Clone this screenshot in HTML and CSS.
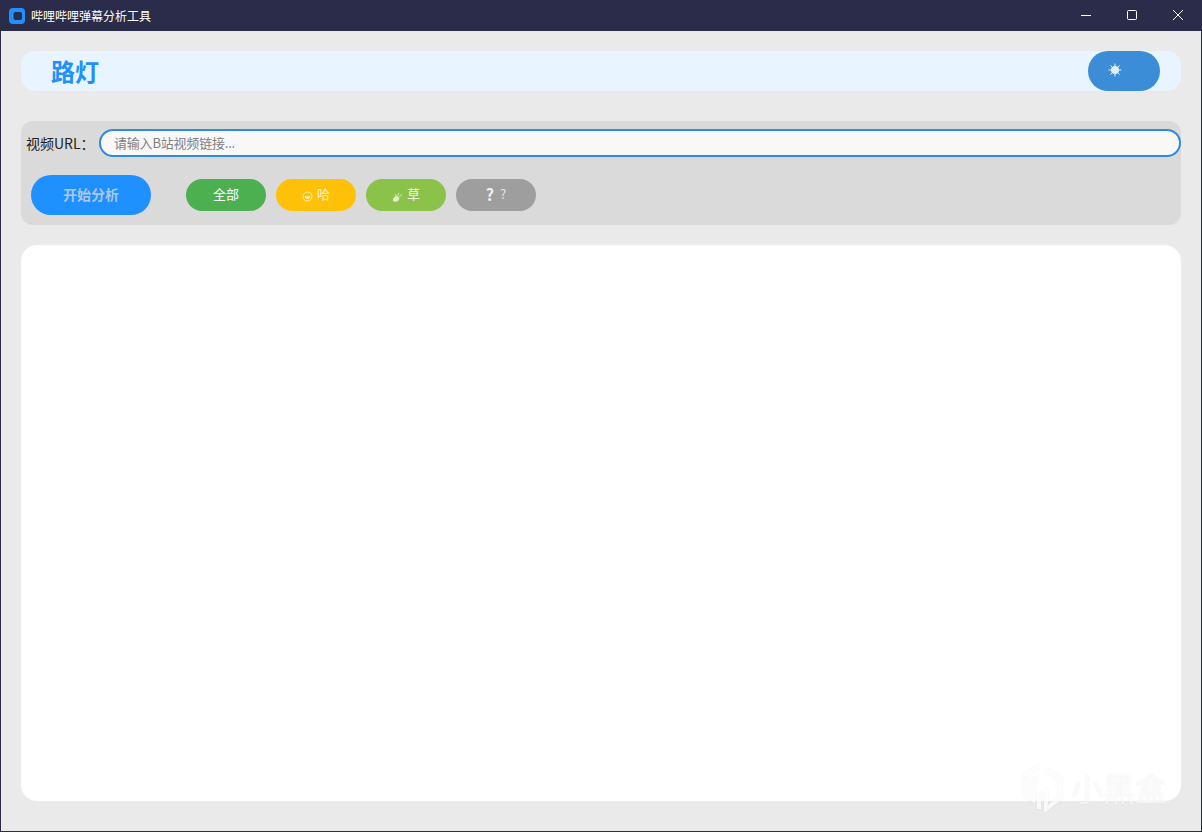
FILE: index.html
```html
<!DOCTYPE html>
<html lang="zh">
<head>
<meta charset="utf-8">
<title>哔哩哔哩弹幕分析工具</title>
<link rel="stylesheet" href="styles.css">
</head>
<body>
<div class="window">
  <div class="titlebar">
    <svg class="app-icon" width="16" height="16" viewBox="0 0 16 16"><rect width="16" height="16" rx="4" fill="#1e90ff"/><rect x="4.500" y="4" width="8.500" height="8" rx="2" fill="#2b2b4a"/></svg>
    <span class="app-title">哔哩哔哩弹幕分析工具</span>
    <div class="win-controls">
      <svg class="win-btn" width="46" height="31" viewBox="0 0 46 31"><path d="M18 15.500h10" stroke="#fff" fill="none"/></svg>
      <svg class="win-btn" width="46" height="31" viewBox="0 0 46 31"><rect x="18.500" y="10.500" width="9" height="9" rx="1" stroke="#fff" fill="none"/></svg>
      <svg class="win-btn" width="46" height="31" viewBox="0 0 46 31"><path d="M18 10l10 10M28 10L18 20" stroke="#fff" fill="none"/></svg>
    </div>
  </div>
  <main class="content">
    <header class="header">
      <h1 class="brand">路灯</h1>
      <button class="theme-btn">
        <svg width="14" height="14" viewBox="0 0 14 14"><circle cx="7" cy="7" r="4" fill="#e3eef8"/><path d="M7 0.500v13M0.500 7h13M2.400 2.400l9.200 9.200M11.600 2.400l-9.200 9.200" stroke="#e3eef8" stroke-width="1"/></svg>
      </button>
    </header>
    <section class="panel">
      <div class="url-row">
        <label class="url-label">视频URL：</label>
        <input class="url-input" type="text" placeholder="请输入B站视频链接...">
      </div>
      <div class="action-row">
        <button class="start-btn">开始分析</button>
        <div class="chips">
          <button class="chip chip-all">全部</button>
          <button class="chip chip-ha">
            <svg class="chip-icon" width="11" height="11" viewBox="0 0 11 11"><circle cx="5.500" cy="5.500" r="4.500" fill="none" stroke="#fff3c8"/><path d="M2.800 5.200h5.400a2.700 2.700 0 0 1-5.400 0z" fill="#fff3c8"/></svg>哈
          </button>
          <button class="chip chip-cao">
            <svg class="chip-icon" width="11" height="11" viewBox="0 0 11 11"><path d="M1.500 10C1 7 3 5 5 5.500 7 6 7.500 8 6 9.500 4.500 10.500 2.500 10.500 1.500 10zM5.500 5l1.500-3M7 6l3-2.500M4 5L3.500 3" fill="#e4f0d4" stroke="#e4f0d4" stroke-width=".8"/></svg>草
          </button>
          <button class="chip chip-q"><span class="q-mark">?</span>?</button>
        </div>
      </div>
    </section>
    <section class="result"></section>
  </main>
  <div class="watermark">
    <svg class="watermark-logo" width="42" height="50" viewBox="0 0 42 50"><path d="M17 3L3 12v20l8 5V18l6-4M24 7l14 8v20l-14 11V29l-7 4v13" fill="none" stroke="#fff" stroke-opacity=".8" stroke-width="4"/></svg>
    <span class="watermark-text">小黑盒</span>
  </div>
</div>
</body>
</html>
```
FILE: styles.css
```css
* { box-sizing: border-box; }
html, body { margin: 0; padding: 0; height: 100%; }
body {
  font-family: "Noto Sans CJK SC", "Noto Sans", sans-serif;
  background: #eaeaea;
  overflow: hidden;
}
.window {
  position: relative;
  width: 1202px;
  height: 832px;
  display: flex;
  flex-direction: column;
  background: #eaeaea;
  border-left: 1px solid #2b2b4a;
  border-right: 1px solid #2b2b4a;
  border-bottom: 1px solid #2b2b4a;
}
.titlebar {
  flex: none;
  height: 31px;
  margin: 0 -1px;
  background: #2b2b4a;
  display: flex;
  align-items: center;
  padding: 0 1px 0 9px;
}
.app-icon { flex: none; }
.app-title {
  margin-left: 6px;
  color: #fff;
  font-size: 12px;
  line-height: 16px;
}
.win-controls { margin-left: auto; display: flex; }
.win-btn { display: block; }
.content {
  flex: 1;
  display: flex;
  flex-direction: column;
  padding: 20px 20px 30px;
  min-height: 0;
}
.header {
  flex: none;
  height: 40px;
  background: #e8f4ff;
  border-radius: 14px;
  display: flex;
  align-items: center;
  justify-content: space-between;
  padding: 0 21px 0 30px;
}
.brand {
  margin: 0;
  color: #1e90ff;
  font-size: 24px;
  line-height: 40px;
  font-weight: 700;
}
.theme-btn {
  width: 72px;
  height: 40px;
  border: 0;
  border-radius: 20px;
  background: #3a8dd6;
  display: flex;
  align-items: center;
  padding: 0 0 2px 20px;
}
.panel {
  flex: none;
  height: 104px;
  margin-top: 30px;
  background: #dadada;
  border-radius: 12px;
  display: flex;
  flex-direction: column;
  padding-top: 8px;
}
.url-row { display: flex; align-items: center; padding-left: 5px; }
.url-label {
  width: 73px;
  font-size: 14px;
  line-height: 28px;
  color: #222;
  white-space: nowrap;
}
.url-input {
  flex: 1;
  height: 28px;
  border: 2px solid #2f8ae0;
  border-radius: 14px;
  background: #f8f8f8;
  padding: 0 13px 2px;
  font: 13px "Noto Sans CJK SC", sans-serif;
  letter-spacing: -.2px;
  outline: none;
}
.url-input::placeholder { color: #808080; opacity: 1; }
.action-row {
  display: flex;
  align-items: center;
  margin-top: 18px;
  padding-left: 10px;
}
.start-btn {
  width: 120px;
  height: 40px;
  border: 0;
  border-radius: 20px;
  background: #1e90ff;
  color: #a9c8e6;
  padding: 0 0 3px;
  font: 700 14px "Noto Sans CJK SC", sans-serif;
}
.chips { display: flex; gap: 10px; margin-left: 35px; }
.chip {
  width: 80px;
  height: 32px;
  border: 0;
  border-radius: 16px;
  color: #fff;
  font: 13px "Noto Sans CJK SC", sans-serif;
  display: flex;
  align-items: center;
  justify-content: center;
  padding: 0 0 3px;
}
.chip-icon { margin: 6px 4px 0 0; }
.chip-all { background: #4caf50; }
.chip-ha { background: #ffc107; color: #fff3c8; }
.chip-cao { background: #8bc34a; color: #f0f6e6; }
.chip-q { background: #9e9e9e; color: #e6e6e6; }
.q-mark { font-weight: 700; font-size: 16px; margin-right: 6px; color: #efeff5; }
.result {
  flex: 1;
  margin-top: 20px;
  background: #fff;
  border-radius: 16px;
}
.watermark {
  position: absolute;
  left: 1021px;
  top: 763px;
  display: flex;
  align-items: center;
  gap: 7px;
  pointer-events: none;
}
.watermark-logo { filter: drop-shadow(0 0 1px rgba(0, 0, 0, .08)); }
.watermark-text {
  font-size: 32px;
  line-height: 50px;
  color: rgba(255, 255, 255, .7);
  text-shadow: 0 0 2px rgba(0, 0, 0, .08);
  margin-top: -2px;
}
```
